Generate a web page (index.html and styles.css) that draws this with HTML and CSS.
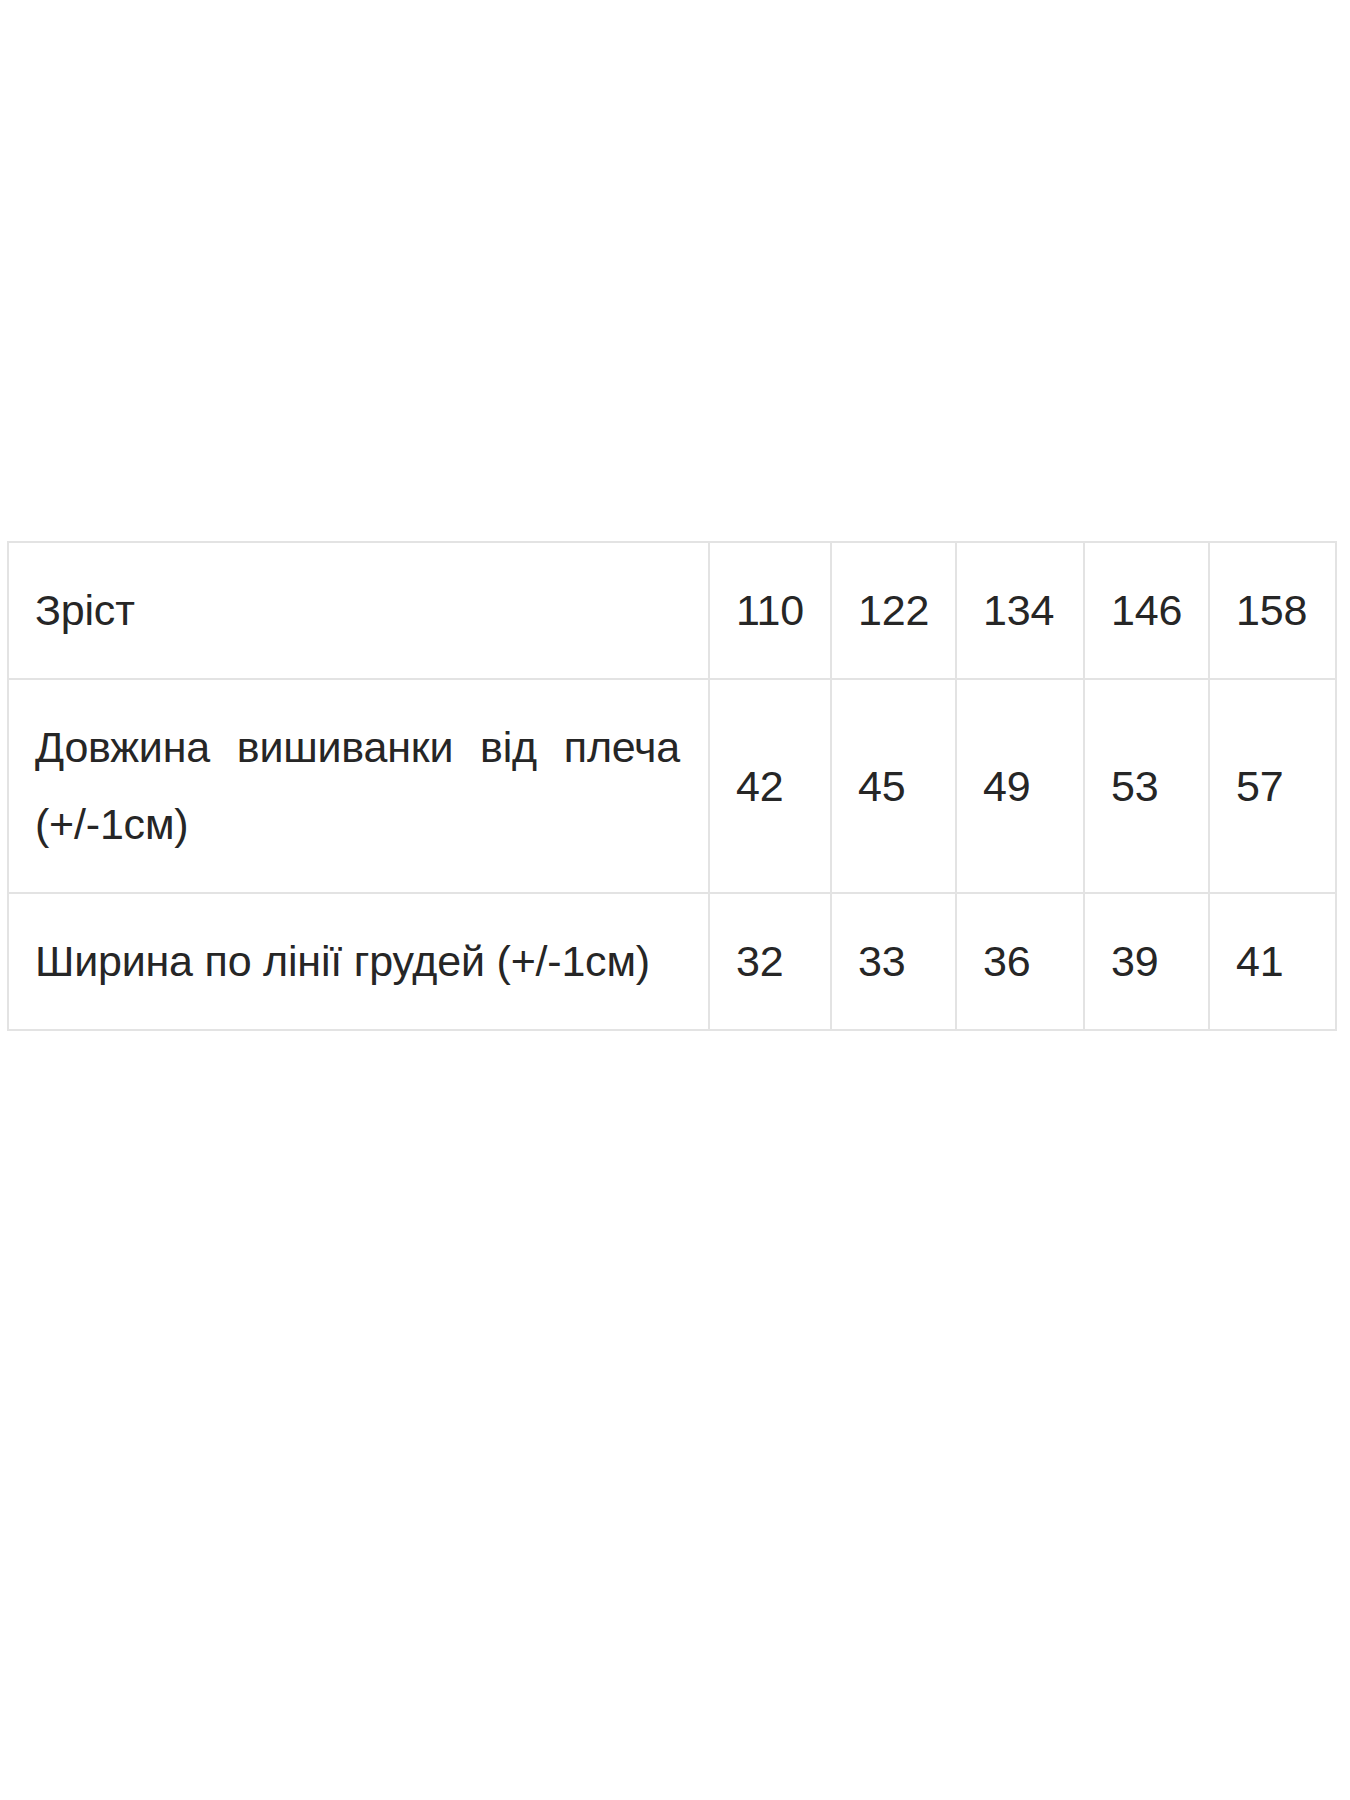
FILE: index.html
```html
<!DOCTYPE html>
<html lang="uk">
<head>
<meta charset="utf-8">
<title>Розмірна сітка</title>
<link rel="stylesheet" href="styles.css">
</head>
<body>
<div class="wrap">
  <table class="sizes">
    <colgroup>
      <col class="c-label">
      <col class="c1">
      <col class="c2">
      <col class="c3">
      <col class="c4">
      <col class="c5">
    </colgroup>
    <tbody>
      <tr class="r1">
        <td class="label">Зріст</td>
        <td>110</td>
        <td>122</td>
        <td>134</td>
        <td>146</td>
        <td>158</td>
      </tr>
      <tr class="r2">
        <td class="label justify">Довжина вишиванки від плеча (+/-1см)</td>
        <td>42</td>
        <td>45</td>
        <td>49</td>
        <td>53</td>
        <td>57</td>
      </tr>
      <tr class="r3">
        <td class="label">Ширина по лінії грудей (+/-1см)</td>
        <td>32</td>
        <td>33</td>
        <td>36</td>
        <td>39</td>
        <td>41</td>
      </tr>
    </tbody>
  </table>
</div>
</body>
</html>
```
FILE: styles.css
```css
html, body {
  background: #ffffff;
}
body {
  margin: 0;
  font-family: "Liberation Sans", Arial, sans-serif;
  color: #262626;
}
.wrap {
  padding: 541px 13px 0 7px;
}
.sizes {
  width: 100%;
  table-layout: fixed;
  border-collapse: collapse;
  font-size: 43px;
  line-height: 77px;
  letter-spacing: -0.2px;
}
.c1 { width: 122px; }
.c2 { width: 125px; }
.c3 { width: 128px; }
.c4 { width: 125px; }
.c5 { width: 127px; }
.sizes td {
  border: 2px solid #e3e3e3;
  padding: 29px 28px 29px 26px;
  vertical-align: middle;
  text-align: left;
}
.sizes td.justify {
  text-align: justify;
}
```
